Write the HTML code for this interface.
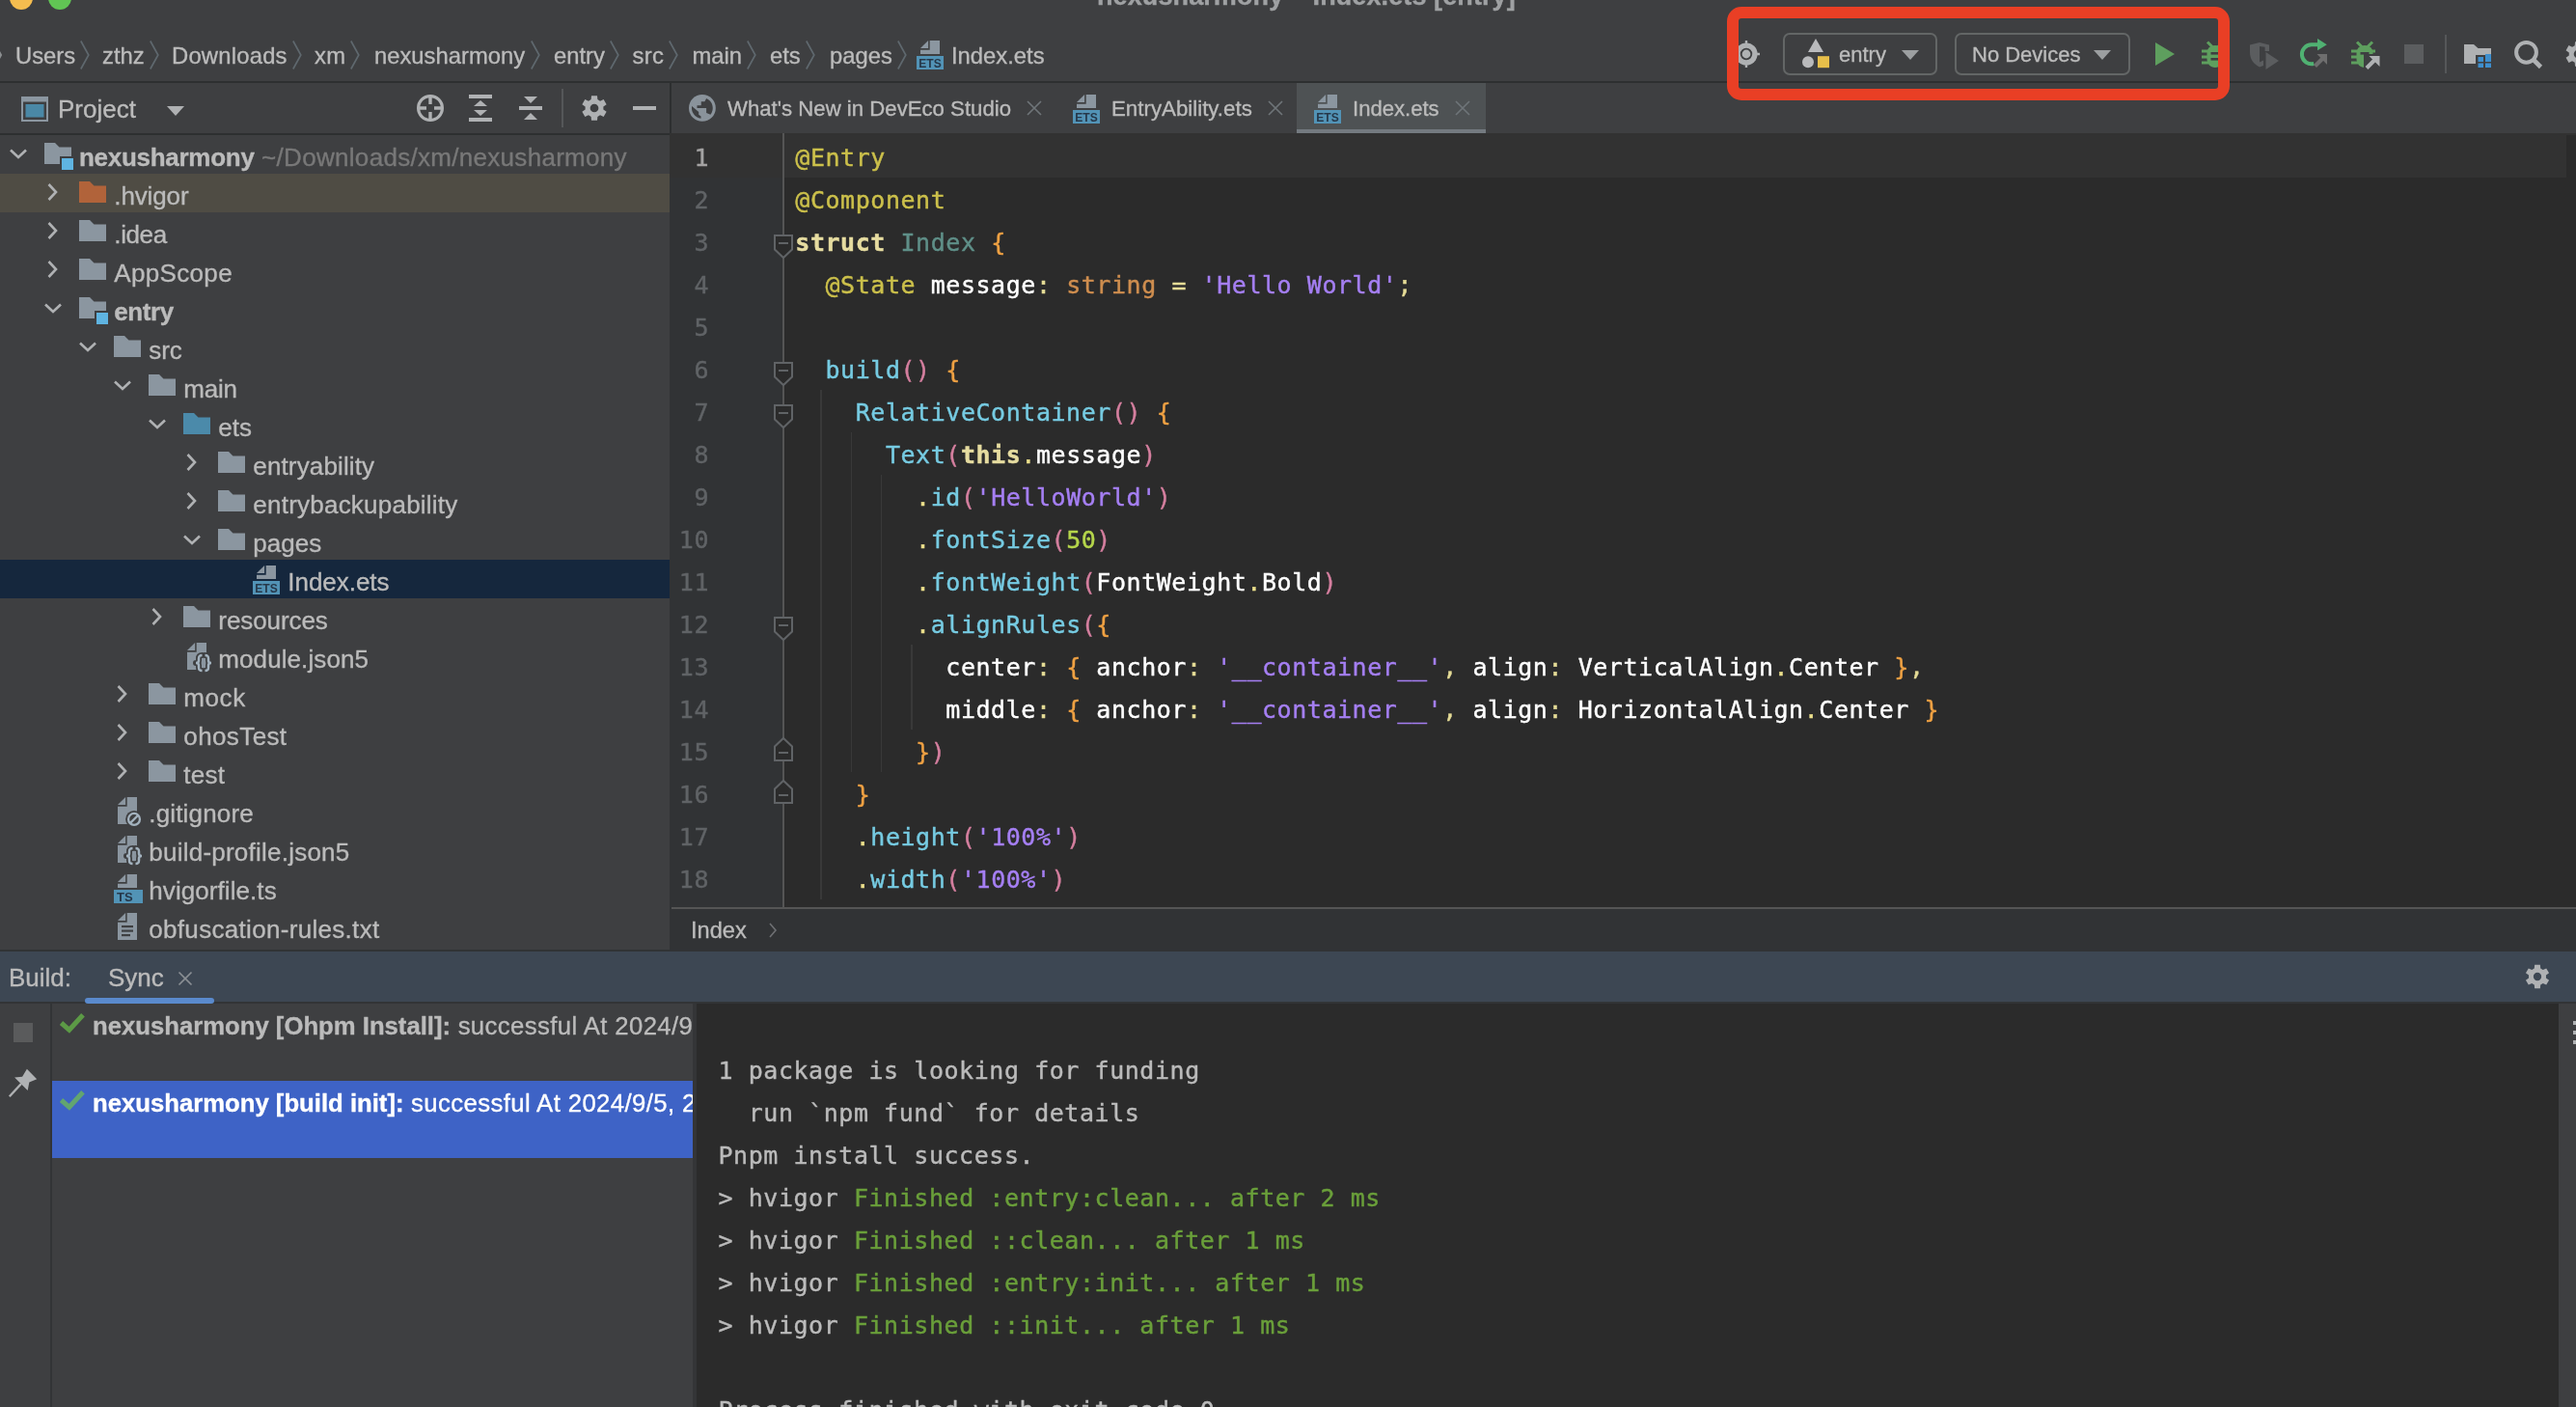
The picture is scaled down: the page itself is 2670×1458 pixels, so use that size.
<!DOCTYPE html><html><head><meta charset="utf-8"><title>nexusharmony – Index.ets [entry]</title>
<style>
html,body{margin:0;padding:0;background:#3e3f41;}
body{width:2670px;height:1458px;overflow:hidden;position:relative;font-family:"Liberation Sans", sans-serif;}
#app{position:absolute;left:0;top:0;width:2670px;height:1458px;overflow:hidden;will-change:transform;}
#app div, #app svg{position:absolute;display:block;}
#app svg{overflow:visible;}
.t{white-space:pre;line-height:40px;height:40px;-webkit-text-stroke:0.35px;}
.t span{white-space:pre;}
.code{font-family:"DejaVu Sans Mono", "Liberation Mono", monospace;font-size:25px;line-height:44px;height:44px;white-space:pre;color:#ffffff;letter-spacing:0.55px;-webkit-text-stroke:0.4px;}
.fn{color:#76cbe2;} .pa{color:#d57f9f;} .br{color:#efa143;} .kw{color:#e6dca0;font-weight:bold;}
.dot{color:#ebdf8b;} .st{color:#a57ff3;} .nu{color:#b5d64b;} .de{color:#ccc04b;} .ty{color:#5f8f88;}
.pt{color:#cf8e4f;} .op{color:#e5dc96;} .id{color:#ffffff;} .cm{color:#e5dc96;}
.con{font-family:"DejaVu Sans Mono", "Liberation Mono", monospace;font-size:25px;line-height:44px;height:44px;white-space:pre;color:#bbbbbb;letter-spacing:0.55px;-webkit-text-stroke:0.4px;}
.g{color:#6a9f3a;}
</style></head><body><div id="app">
<div style="left:10px;top:-14px;width:24px;height:24px;background:#f5bd4f;border-radius:50%;"></div>
<div style="left:50px;top:-14px;width:24px;height:24px;background:#61c554;border-radius:50%;"></div>
<div class="t " style="left:1137px;top:-21px;font-size:27px;color:#9fa1a3;font-weight:bold;line-height:34px;height:34px;letter-spacing:0.1px;">nexusharmony – Index.ets [entry]</div>
<div style="left:0px;top:84px;width:2670px;height:2px;background:#2d2f30;"></div>
<svg style="left:-8px;top:42px;" width="10" height="30" viewBox="0 0 10 30"><path d="M0.8,0.5L8.8,15L0.8,29.5" fill="none" stroke="#8b8e90" stroke-width="2.4"/></svg>
<div class="t " style="left:16px;top:38px;font-size:23.8px;color:#bbbbbb;line-height:40px;height:40px;width:66px;">Users</div>
<svg style="left:83px;top:42px;" width="10" height="30" viewBox="0 0 10 30"><path d="M0.8,0.5L8.8,15L0.8,29.5" fill="none" stroke="#5f686e" stroke-width="1.7"/></svg>
<div class="t " style="left:106px;top:38px;font-size:23.8px;color:#bbbbbb;line-height:40px;height:40px;width:47.5px;">zthz</div>
<svg style="left:154.5px;top:42px;" width="10" height="30" viewBox="0 0 10 30"><path d="M0.8,0.5L8.8,15L0.8,29.5" fill="none" stroke="#5f686e" stroke-width="1.7"/></svg>
<div class="t " style="left:178px;top:38px;font-size:23.8px;color:#bbbbbb;line-height:40px;height:40px;letter-spacing:0.22px;width:123.5px;">Downloads</div>
<svg style="left:302.5px;top:42px;" width="10" height="30" viewBox="0 0 10 30"><path d="M0.8,0.5L8.8,15L0.8,29.5" fill="none" stroke="#5f686e" stroke-width="1.7"/></svg>
<div class="t " style="left:326px;top:38px;font-size:23.8px;color:#bbbbbb;line-height:40px;height:40px;letter-spacing:0.24px;width:36px;">xm</div>
<svg style="left:363px;top:42px;" width="10" height="30" viewBox="0 0 10 30"><path d="M0.8,0.5L8.8,15L0.8,29.5" fill="none" stroke="#5f686e" stroke-width="1.7"/></svg>
<div class="t " style="left:388px;top:38px;font-size:23.8px;color:#bbbbbb;line-height:40px;height:40px;width:160.5px;">nexusharmony</div>
<svg style="left:549.5px;top:42px;" width="10" height="30" viewBox="0 0 10 30"><path d="M0.8,0.5L8.8,15L0.8,29.5" fill="none" stroke="#5f686e" stroke-width="1.7"/></svg>
<div class="t " style="left:574px;top:38px;font-size:23.8px;color:#bbbbbb;line-height:40px;height:40px;width:57px;">entry</div>
<svg style="left:632px;top:42px;" width="10" height="30" viewBox="0 0 10 30"><path d="M0.8,0.5L8.8,15L0.8,29.5" fill="none" stroke="#5f686e" stroke-width="1.7"/></svg>
<div class="t " style="left:655.5px;top:38px;font-size:23.8px;color:#bbbbbb;line-height:40px;height:40px;letter-spacing:0.37px;width:36.5px;">src</div>
<svg style="left:693px;top:42px;" width="10" height="30" viewBox="0 0 10 30"><path d="M0.8,0.5L8.8,15L0.8,29.5" fill="none" stroke="#5f686e" stroke-width="1.7"/></svg>
<div class="t " style="left:717.5px;top:38px;font-size:23.8px;color:#bbbbbb;line-height:40px;height:40px;width:55.5px;">main</div>
<svg style="left:774px;top:42px;" width="10" height="30" viewBox="0 0 10 30"><path d="M0.8,0.5L8.8,15L0.8,29.5" fill="none" stroke="#5f686e" stroke-width="1.7"/></svg>
<div class="t " style="left:798px;top:38px;font-size:23.8px;color:#bbbbbb;line-height:40px;height:40px;width:36px;">ets</div>
<svg style="left:835px;top:42px;" width="10" height="30" viewBox="0 0 10 30"><path d="M0.8,0.5L8.8,15L0.8,29.5" fill="none" stroke="#5f686e" stroke-width="1.7"/></svg>
<div class="t " style="left:860px;top:38px;font-size:23.8px;color:#bbbbbb;line-height:40px;height:40px;width:69px;">pages</div>
<svg style="left:930px;top:42px;" width="10" height="30" viewBox="0 0 10 30"><path d="M0.8,0.5L8.8,15L0.8,29.5" fill="none" stroke="#5f686e" stroke-width="1.7"/></svg>
<svg style="left:949px;top:42px;" width="30" height="30" viewBox="0 0 30 30"><path d="M14.7,0H25V14H5V9.7H14.7Z" fill="#8b96a0"/><path d="M5,8.1L13.1,0V8.1Z" fill="#8b96a0"/><rect x="1" y="16" width="28" height="14" fill="#5293b6"/><text x="15" y="27.8" font-family="Liberation Sans, sans-serif" font-weight="bold" font-size="13" fill="#26384a" text-anchor="middle" textLength="23.5" lengthAdjust="spacingAndGlyphs">ETS</text></svg>
<div class="t " style="left:986px;top:38px;font-size:23.8px;color:#bbbbbb;line-height:40px;height:40px;">Index.ets</div>
<svg style="left:1796px;top:42px;" width="28" height="28" viewBox="0 0 28 28"><path d="M14,0V28M0,14H28" stroke="#afb1b3" stroke-width="2.4"/><circle cx="14" cy="14" r="11.6" fill="#afb1b3"/><circle cx="14" cy="14" r="5.3" fill="none" stroke="#3e3f41" stroke-width="1.8"/></svg>
<div style="left:1848px;top:34px;width:156px;height:40px;background:transparent;border:2px solid #636666;border-radius:7px;"></div>
<svg style="left:1866px;top:38px;" width="32" height="34" viewBox="0 0 32 34"><path d="M16,2L24,16H8Z" fill="#b9babc"/><circle cx="8" cy="26.2" r="6" fill="#b9babc"/><rect x="18" y="20.2" width="12" height="12" fill="#e8bf4a"/></svg>
<div class="t " style="left:1906px;top:37px;font-size:22px;color:#bbbbbb;line-height:40px;height:40px;">entry</div>
<svg style="left:1971px;top:52px;" width="18" height="10" viewBox="0 0 18 10"><path d="M0,0H18L9,10Z" fill="#9c9fa1"/></svg>
<div style="left:2026px;top:34px;width:178px;height:40px;background:transparent;border:2px solid #636666;border-radius:7px;"></div>
<div class="t " style="left:2044px;top:37px;font-size:22px;color:#bbbbbb;line-height:40px;height:40px;">No Devices</div>
<svg style="left:2170px;top:52px;" width="18" height="10" viewBox="0 0 18 10"><path d="M0,0H18L9,10Z" fill="#9c9fa1"/></svg>
<svg style="left:2234px;top:44px;" width="20" height="24" viewBox="0 0 20 24"><path d="M0,0L20,12L0,24Z" fill="#5e9f5e"/></svg>
<svg style="left:2282px;top:42px;" width="28" height="28" viewBox="0 0 28 28"><path d="M6,1.5L11,6.5M22,1.5L17,6.5" stroke="#5e9f5e" stroke-width="3" fill="none"/><path d="M14,5C20,5 22.5,9 22.5,13V19C22.5,24 19,28 14,28C9,28 5.5,24 5.5,19V13C5.5,9 8,5 14,5Z" fill="#5e9f5e"/><path d="M0,11H7M0,17H7M0,23H7M21,11H28M21,17H28M21,23H28" stroke="#5e9f5e" stroke-width="3" fill="none"/><rect x="9.5" y="12" width="9" height="2.6" fill="#3e3f41"/><rect x="9.5" y="18" width="9" height="2.6" fill="#3e3f41"/></svg>
<svg style="left:2332px;top:44px;" width="30" height="28" viewBox="0 0 30 28"><path d="M10,0L20,2.5V9H14V24L10,25.5C4,22 0,18 0,10V2.5Z" fill="#5b5d5f"/><path d="M10,4L15.6,4.8V9.5H14V18.5L10,20.5Z" fill="#3e3f41"/><path d="M16.5,10L30,19L16.5,28Z" fill="#5b5d5f"/></svg>
<svg style="left:2383px;top:40px;" width="30" height="30" viewBox="0 0 30 30"><path d="M19,6.3H12.8A10,10 0 1 0 15.3,26" fill="none" stroke="#50b172" stroke-width="4"/><path d="M19,0L28.8,6.2L19,12.2Z" fill="#50b172"/><path d="M16.5,28.5L25.5,19.5" stroke="#6e6e6e" stroke-width="4.2" fill="none"/><path d="M18.5,16H29V27Z" fill="#6e6e6e"/></svg>
<svg style="left:2437px;top:42px;" width="30" height="30" viewBox="0 0 30 30"><path d="M6,1.5L11,6.5M22,1.5L17,6.5" stroke="#5e9f5e" stroke-width="3" fill="none"/><path d="M14,5C20,5 22.5,9 22.5,13V19C22.5,24 19,28 14,28C9,28 5.5,24 5.5,19V13C5.5,9 8,5 14,5Z" fill="#5e9f5e"/><path d="M0,11H7M0,17H7M0,23H7M21,11H25" stroke="#5e9f5e" stroke-width="3" fill="none"/><rect x="9.5" y="12" width="9" height="2.6" fill="#3e3f41"/><path d="M11,30L31,10V30Z" fill="#3e3f41"/><rect x="13" y="14" width="18" height="17" fill="#3e3f41"/><path d="M16,28.5L26,18.5" stroke="#afb1b3" stroke-width="4" fill="none"/><path d="M18.5,16H29.5V27Z" fill="#afb1b3"/></svg>
<div style="left:2492px;top:46px;width:20px;height:20px;background:#5b5d5f;"></div>
<div style="left:2534px;top:36px;width:2px;height:40px;background:#555759;"></div>
<svg style="left:2554px;top:46px;" width="28" height="24" viewBox="0 0 28 24"><path d="M0,0H10L14.5,4H28V11H12V20H0Z" fill="#afb1b3"/><rect x="14.5" y="13" width="5.5" height="5" fill="#3e8fce"/><rect x="22" y="10" width="6" height="8" fill="#3e8fce"/><rect x="14.5" y="19.5" width="5.5" height="4.5" fill="#3e8fce"/><rect x="22" y="19.5" width="6" height="4.5" fill="#3e8fce"/></svg>
<svg style="left:2604px;top:40px;" width="32" height="32" viewBox="0 0 32 32"><circle cx="14.5" cy="14.3" r="10.4" fill="none" stroke="#afb1b3" stroke-width="4"/><path d="M21.5,21.5L29.5,29.5" stroke="#afb1b3" stroke-width="4.6"/></svg>
<svg style="left:2656px;top:40px;" width="32" height="32" viewBox="0 0 32 32"><path d="M12.70,7.24L13.04,3.34L18.96,3.34L19.30,7.24L21.94,8.76L25.48,7.10L28.44,12.24L25.24,14.48L25.24,17.52L28.44,19.76L25.48,24.90L21.94,23.24L19.30,24.76L18.96,28.66L13.04,28.66L12.70,24.76L10.06,23.24L6.52,24.90L3.56,19.76L6.76,17.52L6.76,14.48L3.56,12.24L6.52,7.10L10.06,8.76ZM20.29,16.00A4.29,4.29 0 1 0 11.71,16.00A4.29,4.29 0 1 0 20.29,16.00Z" fill="#afb1b3" fill-rule="evenodd"/></svg>
<div style="left:0px;top:138px;width:694px;height:2px;background:#2d2f30;"></div>
<div style="left:694px;top:86px;width:2px;height:54px;background:#2d2f30;"></div>
<svg style="left:22px;top:100px;" width="28" height="26" viewBox="0 0 28 26"><rect x="0" y="0" width="28" height="26" fill="#8b96a0"/><rect x="2" y="5.5" width="24" height="18.5" fill="#3e3f41"/><rect x="4.5" y="8" width="19" height="13.5" fill="#4a88a6"/></svg>
<div class="t " style="left:60px;top:93px;font-size:26px;color:#bbbbbb;line-height:40px;height:40px;">Project</div>
<svg style="left:173px;top:110px;" width="18" height="10" viewBox="0 0 18 10"><path d="M0,0H18L9,10Z" fill="#afb1b3"/></svg>
<svg style="left:432px;top:98px;" width="28" height="28" viewBox="0 0 28 28"><circle cx="14" cy="14" r="12.4" fill="none" stroke="#afb1b3" stroke-width="3.2"/><path d="M14,2V10M14,18V26M2,14H10M18,14H26" stroke="#afb1b3" stroke-width="3.4" fill="none"/></svg>
<svg style="left:486px;top:98px;" width="24" height="28" viewBox="0 0 24 28"><rect x="0" y="0" width="24" height="4" fill="#afb1b3"/><rect x="0" y="24" width="24" height="4" fill="#afb1b3"/><path d="M12,6L19,12H5Z" fill="#afb1b3"/><path d="M12,22L19,16H5Z" fill="#afb1b3"/></svg>
<svg style="left:538px;top:98px;" width="24" height="28" viewBox="0 0 24 28"><rect x="0" y="12" width="24" height="4" fill="#afb1b3"/><path d="M12,9L19,2H5Z" fill="#afb1b3"/><path d="M12,19L19,26H5Z" fill="#afb1b3"/></svg>
<div style="left:582px;top:92px;width:2px;height:40px;background:#555759;"></div>
<svg style="left:602px;top:98px;" width="28" height="28" viewBox="0 0 28 28"><path d="M10.65,5.11L10.99,1.15L17.01,1.15L17.35,5.11L20.03,6.65L23.63,4.97L26.64,10.18L23.38,12.45L23.38,15.55L26.64,17.82L23.63,23.03L20.03,21.35L17.35,22.89L17.01,26.85L10.99,26.85L10.65,22.89L7.97,21.35L4.37,23.03L1.36,17.82L4.62,15.55L4.62,12.45L1.36,10.18L4.37,4.97L7.97,6.65ZM18.36,14.00A4.36,4.36 0 1 0 9.64,14.00A4.36,4.36 0 1 0 18.36,14.00Z" fill="#afb1b3" fill-rule="evenodd"/></svg>
<div style="left:656px;top:110px;width:24px;height:4px;background:#afb1b3;"></div>
<svg style="left:8px;top:151px;" width="22" height="16" viewBox="0 0 22 16"><path d="M3,4.5L11,12L19,4.5" fill="none" stroke="#afb1b3" stroke-width="2.6"/></svg>
<svg style="left:46px;top:148px;" width="32" height="30" viewBox="0 0 32 30"><path d="M0,0H11L15.5,4.5H28V22H0Z" fill="#8b96a0"/><rect x="16" y="14" width="16" height="16" fill="#3e3f41"/><rect x="18" y="16" width="12" height="12" fill="#5fb4e1"/></svg>
<div class="t " style="left:82px;top:143px;font-size:26px;color:#bbbbbb;line-height:40px;height:40px;"><span style="font-weight:bold;letter-spacing:-0.28px">nexusharmony</span><span style="color:#787878;letter-spacing:0.3px"> ~/Downloads/xm/nexusharmony</span></div>
<div style="left:0px;top:180px;width:694px;height:40px;background:#4f4c44;"></div>
<svg style="left:46px;top:188px;" width="16" height="22" viewBox="0 0 16 22"><path d="M4.5,3L12,11L4.5,19" fill="none" stroke="#afb1b3" stroke-width="2.6"/></svg>
<svg style="left:82px;top:188px;" width="28" height="22" viewBox="0 0 28 22"><path d="M0,0H11L15.5,4.5H28V22H0Z" fill="#b1633a"/></svg>
<div class="t " style="left:118.3px;top:183px;font-size:26px;color:#bbbbbb;line-height:40px;height:40px;"><span style="letter-spacing:-0.13px">.hvigor</span></div>
<svg style="left:46px;top:228px;" width="16" height="22" viewBox="0 0 16 22"><path d="M4.5,3L12,11L4.5,19" fill="none" stroke="#afb1b3" stroke-width="2.6"/></svg>
<svg style="left:82px;top:228px;" width="28" height="22" viewBox="0 0 28 22"><path d="M0,0H11L15.5,4.5H28V22H0Z" fill="#8b96a0"/></svg>
<div class="t " style="left:118.3px;top:223px;font-size:26px;color:#bbbbbb;line-height:40px;height:40px;"><span style="letter-spacing:-0.38px">.idea</span></div>
<svg style="left:46px;top:268px;" width="16" height="22" viewBox="0 0 16 22"><path d="M4.5,3L12,11L4.5,19" fill="none" stroke="#afb1b3" stroke-width="2.6"/></svg>
<svg style="left:82px;top:268px;" width="28" height="22" viewBox="0 0 28 22"><path d="M0,0H11L15.5,4.5H28V22H0Z" fill="#8b96a0"/></svg>
<div class="t " style="left:118.3px;top:263px;font-size:26px;color:#bbbbbb;line-height:40px;height:40px;"><span style="letter-spacing:0.33px">AppScope</span></div>
<svg style="left:44px;top:311px;" width="22" height="16" viewBox="0 0 22 16"><path d="M3,4.5L11,12L19,4.5" fill="none" stroke="#afb1b3" stroke-width="2.6"/></svg>
<svg style="left:82px;top:308px;" width="32" height="30" viewBox="0 0 32 30"><path d="M0,0H11L15.5,4.5H28V22H0Z" fill="#8b96a0"/><rect x="16" y="14" width="16" height="16" fill="#3e3f41"/><rect x="18" y="16" width="12" height="12" fill="#5fb4e1"/></svg>
<div class="t " style="left:118.3px;top:303px;font-size:26px;color:#bbbbbb;line-height:40px;height:40px;"><span style="font-weight:bold;letter-spacing:-0.4px">entry</span></div>
<svg style="left:80px;top:351px;" width="22" height="16" viewBox="0 0 22 16"><path d="M3,4.5L11,12L19,4.5" fill="none" stroke="#afb1b3" stroke-width="2.6"/></svg>
<svg style="left:118px;top:348px;" width="28" height="22" viewBox="0 0 28 22"><path d="M0,0H11L15.5,4.5H28V22H0Z" fill="#8b96a0"/></svg>
<div class="t " style="left:154.3px;top:343px;font-size:26px;color:#bbbbbb;line-height:40px;height:40px;"><span style="letter-spacing:-0.1px">src</span></div>
<svg style="left:116px;top:391px;" width="22" height="16" viewBox="0 0 22 16"><path d="M3,4.5L11,12L19,4.5" fill="none" stroke="#afb1b3" stroke-width="2.6"/></svg>
<svg style="left:154px;top:388px;" width="28" height="22" viewBox="0 0 28 22"><path d="M0,0H11L15.5,4.5H28V22H0Z" fill="#8b96a0"/></svg>
<div class="t " style="left:190.3px;top:383px;font-size:26px;color:#bbbbbb;line-height:40px;height:40px;"><span style="letter-spacing:-0.23px">main</span></div>
<svg style="left:152px;top:431px;" width="22" height="16" viewBox="0 0 22 16"><path d="M3,4.5L11,12L19,4.5" fill="none" stroke="#afb1b3" stroke-width="2.6"/></svg>
<svg style="left:190px;top:428px;" width="28" height="22" viewBox="0 0 28 22"><path d="M0,0H11L15.5,4.5H28V22H0Z" fill="#4b8aaa"/></svg>
<div class="t " style="left:226.3px;top:423px;font-size:26px;color:#bbbbbb;line-height:40px;height:40px;"><span style="letter-spacing:0.05px">ets</span></div>
<svg style="left:190px;top:468px;" width="16" height="22" viewBox="0 0 16 22"><path d="M4.5,3L12,11L4.5,19" fill="none" stroke="#afb1b3" stroke-width="2.6"/></svg>
<svg style="left:226px;top:468px;" width="28" height="22" viewBox="0 0 28 22"><path d="M0,0H11L15.5,4.5H28V22H0Z" fill="#8b96a0"/></svg>
<div class="t " style="left:262.3px;top:463px;font-size:26px;color:#bbbbbb;line-height:40px;height:40px;"><span style="letter-spacing:0.14px">entryability</span></div>
<svg style="left:190px;top:508px;" width="16" height="22" viewBox="0 0 16 22"><path d="M4.5,3L12,11L4.5,19" fill="none" stroke="#afb1b3" stroke-width="2.6"/></svg>
<svg style="left:226px;top:508px;" width="28" height="22" viewBox="0 0 28 22"><path d="M0,0H11L15.5,4.5H28V22H0Z" fill="#8b96a0"/></svg>
<div class="t " style="left:262.3px;top:503px;font-size:26px;color:#bbbbbb;line-height:40px;height:40px;"><span style="letter-spacing:0.23px">entrybackupability</span></div>
<svg style="left:188px;top:551px;" width="22" height="16" viewBox="0 0 22 16"><path d="M3,4.5L11,12L19,4.5" fill="none" stroke="#afb1b3" stroke-width="2.6"/></svg>
<svg style="left:226px;top:548px;" width="28" height="22" viewBox="0 0 28 22"><path d="M0,0H11L15.5,4.5H28V22H0Z" fill="#8b96a0"/></svg>
<div class="t " style="left:262.3px;top:543px;font-size:26px;color:#bbbbbb;line-height:40px;height:40px;">pages</div>
<div style="left:0px;top:580px;width:694px;height:40px;background:#15273d;"></div>
<svg style="left:261px;top:586px;" width="30" height="30" viewBox="0 0 30 30"><path d="M14.7,0H25V14H5V9.7H14.7Z" fill="#8b96a0"/><path d="M5,8.1L13.1,0V8.1Z" fill="#8b96a0"/><rect x="1" y="16" width="28" height="14" fill="#5293b6"/><text x="15" y="27.8" font-family="Liberation Sans, sans-serif" font-weight="bold" font-size="13" fill="#26384a" text-anchor="middle" textLength="23.5" lengthAdjust="spacingAndGlyphs">ETS</text></svg>
<div class="t " style="left:298.3px;top:583px;font-size:26px;color:#bbbbbb;line-height:40px;height:40px;"><span style="letter-spacing:-0.04px">Index.ets</span></div>
<svg style="left:154px;top:628px;" width="16" height="22" viewBox="0 0 16 22"><path d="M4.5,3L12,11L4.5,19" fill="none" stroke="#afb1b3" stroke-width="2.6"/></svg>
<svg style="left:190px;top:628px;" width="28" height="22" viewBox="0 0 28 22"><path d="M0,0H11L15.5,4.5H28V22H0Z" fill="#8b96a0"/></svg>
<div class="t " style="left:226.3px;top:623px;font-size:26px;color:#bbbbbb;line-height:40px;height:40px;"><span style="letter-spacing:-0.08px">resources</span></div>
<svg style="left:194px;top:666px;" width="30" height="32" viewBox="0 0 30 32"><path d="M9.7,0H20V28H0V9.7H9.7Z" fill="#8b96a0"/><path d="M0,8.1L8.1,0V8.1Z" fill="#8b96a0"/><path d="M15.5,13C12.5,13 12,14 12,16.5V18.5C12,20.5 10.5,21 9,21C10.5,21 12,21.5 12,23.5V25.5C12,28 12.5,29 15.5,29M18.5,13C21.5,13 22,14 22,16.5V18.5C22,20.5 23.5,21 25,21C23.5,21 22,21.5 22,23.5V25.5C22,28 21.5,29 18.5,29" fill="none" stroke="#3e3f41" stroke-width="6" stroke-linecap="round" stroke-linejoin="round"/><path d="M15.5,13C12.5,13 12,14 12,16.5V18.5C12,20.5 10.5,21 9,21C10.5,21 12,21.5 12,23.5V25.5C12,28 12.5,29 15.5,29M18.5,13C21.5,13 22,14 22,16.5V18.5C22,20.5 23.5,21 25,21C23.5,21 22,21.5 22,23.5V25.5C22,28 21.5,29 18.5,29" fill="none" stroke="#a3b2be" stroke-width="2.5"/></svg>
<div class="t " style="left:226.3px;top:663px;font-size:26px;color:#bbbbbb;line-height:40px;height:40px;"><span style="letter-spacing:0.09px">module.json5</span></div>
<svg style="left:118px;top:708px;" width="16" height="22" viewBox="0 0 16 22"><path d="M4.5,3L12,11L4.5,19" fill="none" stroke="#afb1b3" stroke-width="2.6"/></svg>
<svg style="left:154px;top:708px;" width="28" height="22" viewBox="0 0 28 22"><path d="M0,0H11L15.5,4.5H28V22H0Z" fill="#8b96a0"/></svg>
<div class="t " style="left:190.3px;top:703px;font-size:26px;color:#bbbbbb;line-height:40px;height:40px;"><span style="letter-spacing:0.57px">mock</span></div>
<svg style="left:118px;top:748px;" width="16" height="22" viewBox="0 0 16 22"><path d="M4.5,3L12,11L4.5,19" fill="none" stroke="#afb1b3" stroke-width="2.6"/></svg>
<svg style="left:154px;top:748px;" width="28" height="22" viewBox="0 0 28 22"><path d="M0,0H11L15.5,4.5H28V22H0Z" fill="#8b96a0"/></svg>
<div class="t " style="left:190.3px;top:743px;font-size:26px;color:#bbbbbb;line-height:40px;height:40px;"><span style="letter-spacing:0.39px">ohosTest</span></div>
<svg style="left:118px;top:788px;" width="16" height="22" viewBox="0 0 16 22"><path d="M4.5,3L12,11L4.5,19" fill="none" stroke="#afb1b3" stroke-width="2.6"/></svg>
<svg style="left:154px;top:788px;" width="28" height="22" viewBox="0 0 28 22"><path d="M0,0H11L15.5,4.5H28V22H0Z" fill="#8b96a0"/></svg>
<div class="t " style="left:190.3px;top:783px;font-size:26px;color:#bbbbbb;line-height:40px;height:40px;"><span style="letter-spacing:0.27px">test</span></div>
<svg style="left:122px;top:826px;" width="30" height="34" viewBox="0 0 30 34"><path d="M9.7,0H20V28H0V9.7H9.7Z" fill="#8b96a0"/><path d="M0,8.1L8.1,0V8.1Z" fill="#8b96a0"/><circle cx="17" cy="22.9" r="8.9" fill="#3e3f41"/><circle cx="17" cy="22.9" r="5.95" fill="none" stroke="#a3b2be" stroke-width="2.3"/><path d="M12.8,27.1L21.2,18.7" stroke="#a3b2be" stroke-width="2.3"/></svg>
<div class="t " style="left:154.3px;top:823px;font-size:26px;color:#bbbbbb;line-height:40px;height:40px;"><span style="letter-spacing:0.16px">.gitignore</span></div>
<svg style="left:122px;top:866px;" width="30" height="32" viewBox="0 0 30 32"><path d="M9.7,0H20V28H0V9.7H9.7Z" fill="#8b96a0"/><path d="M0,8.1L8.1,0V8.1Z" fill="#8b96a0"/><path d="M15.5,13C12.5,13 12,14 12,16.5V18.5C12,20.5 10.5,21 9,21C10.5,21 12,21.5 12,23.5V25.5C12,28 12.5,29 15.5,29M18.5,13C21.5,13 22,14 22,16.5V18.5C22,20.5 23.5,21 25,21C23.5,21 22,21.5 22,23.5V25.5C22,28 21.5,29 18.5,29" fill="none" stroke="#3e3f41" stroke-width="6" stroke-linecap="round" stroke-linejoin="round"/><path d="M15.5,13C12.5,13 12,14 12,16.5V18.5C12,20.5 10.5,21 9,21C10.5,21 12,21.5 12,23.5V25.5C12,28 12.5,29 15.5,29M18.5,13C21.5,13 22,14 22,16.5V18.5C22,20.5 23.5,21 25,21C23.5,21 22,21.5 22,23.5V25.5C22,28 21.5,29 18.5,29" fill="none" stroke="#a3b2be" stroke-width="2.5"/></svg>
<div class="t " style="left:154.3px;top:863px;font-size:26px;color:#bbbbbb;line-height:40px;height:40px;"><span style="letter-spacing:0.23px">build-profile.json5</span></div>
<svg style="left:118px;top:906px;" width="30" height="30" viewBox="0 0 30 30"><path d="M13.7,0H24V14H4V9.7H13.7Z" fill="#8b96a0"/><path d="M4,8.1L12.1,0V8.1Z" fill="#8b96a0"/><rect x="0" y="16" width="30" height="14" fill="#5293b6"/><text x="3" y="27.8" font-family="Liberation Sans, sans-serif" font-weight="bold" font-size="13" fill="#26384a">TS</text></svg>
<div class="t " style="left:154.3px;top:903px;font-size:26px;color:#bbbbbb;line-height:40px;height:40px;"><span style="letter-spacing:0.07px">hvigorfile.ts</span></div>
<svg style="left:122px;top:946px;" width="20" height="28" viewBox="0 0 20 28"><path d="M9.7,0H20V28H0V9.7H9.7Z" fill="#8b96a0"/><path d="M0,8.1L8.1,0V8.1Z" fill="#8b96a0"/><rect x="4" y="13" width="12" height="2.2" fill="#3e3f41"/><rect x="4" y="17.5" width="12" height="2.2" fill="#3e3f41"/><rect x="4" y="22" width="9" height="2.2" fill="#3e3f41"/></svg>
<div class="t " style="left:154.3px;top:943px;font-size:26px;color:#bbbbbb;line-height:40px;height:40px;"><span style="letter-spacing:0.31px">obfuscation-rules.txt</span></div>
<div style="left:0px;top:984px;width:694px;height:2px;background:#313335;"></div>
<div style="left:696px;top:138px;width:1974px;height:2px;background:#323232;"></div>
<svg style="left:708px;top:92px;" width="40" height="40" viewBox="0 0 40 40"><circle cx="19.9" cy="19.9" r="13.9" fill="#8a939b"/><path d="M24.1,9.9A10.9,10.9 0 0 1 28.4,26.7L24.1,25V19.9H14.5V17.3H18.75V13.35H22.4Z" fill="#3e3f41"/><path d="M9.1,17.9L16.2,24.1V26.7L18.5,28.4V30.7A10.9,10.9 0 0 1 9.1,17.9Z" fill="#3e3f41"/></svg>
<div class="t " style="left:754px;top:93px;font-size:22.2px;color:#bbbbbb;line-height:40px;height:40px;">What&#x27;s New in DevEco Studio</div>
<svg style="left:1062.4px;top:101.6px;" width="20" height="20" viewBox="0 0 20 20"><path d="M3,3L17,17M17,3L3,17" stroke="#6e7478" stroke-width="1.7" fill="none"/></svg>
<svg style="left:1111px;top:98px;" width="30" height="30" viewBox="0 0 30 30"><path d="M14.7,0H25V14H5V9.7H14.7Z" fill="#8b96a0"/><path d="M5,8.1L13.1,0V8.1Z" fill="#8b96a0"/><rect x="1" y="16" width="28" height="14" fill="#5293b6"/><text x="15" y="27.8" font-family="Liberation Sans, sans-serif" font-weight="bold" font-size="13" fill="#26384a" text-anchor="middle" textLength="23.5" lengthAdjust="spacingAndGlyphs">ETS</text></svg>
<div class="t " style="left:1152px;top:93px;font-size:22.3px;color:#bbbbbb;line-height:40px;height:40px;">EntryAbility.ets</div>
<svg style="left:1312px;top:101.6px;" width="20" height="20" viewBox="0 0 20 20"><path d="M3,3L17,17M17,3L3,17" stroke="#6e7478" stroke-width="1.7" fill="none"/></svg>
<div style="left:1344px;top:86px;width:196px;height:54px;background:#4e5254;"></div>
<div style="left:1344px;top:134px;width:196px;height:6px;background:#747a80;"></div>
<svg style="left:1361px;top:98px;" width="30" height="30" viewBox="0 0 30 30"><path d="M14.7,0H25V14H5V9.7H14.7Z" fill="#8b96a0"/><path d="M5,8.1L13.1,0V8.1Z" fill="#8b96a0"/><rect x="1" y="16" width="28" height="14" fill="#5293b6"/><text x="15" y="27.8" font-family="Liberation Sans, sans-serif" font-weight="bold" font-size="13" fill="#26384a" text-anchor="middle" textLength="23.5" lengthAdjust="spacingAndGlyphs">ETS</text></svg>
<div class="t " style="left:1402px;top:93px;font-size:22.1px;color:#bbbbbb;line-height:40px;height:40px;">Index.ets</div>
<svg style="left:1506px;top:101.6px;" width="20" height="20" viewBox="0 0 20 20"><path d="M3,3L17,17M17,3L3,17" stroke="#6e7478" stroke-width="1.7" fill="none"/></svg>
<div style="left:694px;top:140px;width:119px;height:802px;background:#313335;"></div>
<div style="left:813px;top:140px;width:1857px;height:802px;background:#2b2b2b;"></div>
<div style="left:694px;top:138px;width:1966px;height:46px;background:#323232;"></div>
<div style="left:811px;top:138px;width:2px;height:804px;background:#555555;"></div>
<div style="left:850px;top:404px;width:1.5px;height:528px;background:#393939;"></div>
<div style="left:881.5px;top:448px;width:1.5px;height:352px;background:#393939;"></div>
<div style="left:912.5px;top:492px;width:1.5px;height:308px;background:#393939;"></div>
<div style="left:944px;top:668px;width:1.5px;height:88px;background:#393939;"></div>
<div class="code" style="left:694px;top:142px;width:41px;text-align:right;color:#a4a3a3;">1</div>
<div class="code" style="left:824.3px;top:142px;"><span class="de">@Entry</span></div>
<div class="code" style="left:694px;top:186px;width:41px;text-align:right;color:#606366;">2</div>
<div class="code" style="left:824.3px;top:186px;"><span class="de">@Component</span></div>
<div class="code" style="left:694px;top:230px;width:41px;text-align:right;color:#606366;">3</div>
<div class="code" style="left:824.3px;top:230px;"><span class="kw">struct</span> <span class="ty">Index</span> <span class="br">{</span></div>
<div class="code" style="left:694px;top:274px;width:41px;text-align:right;color:#606366;">4</div>
<div class="code" style="left:824.3px;top:274px;">  <span class="de">@State</span> <span class="id">message</span><span class="op">:</span> <span class="pt">string</span> <span class="op">=</span> <span class="st">&#x27;Hello World&#x27;</span><span class="op">;</span></div>
<div class="code" style="left:694px;top:318px;width:41px;text-align:right;color:#606366;">5</div>
<div class="code" style="left:694px;top:362px;width:41px;text-align:right;color:#606366;">6</div>
<div class="code" style="left:824.3px;top:362px;">  <span class="fn">build</span><span class="pa">()</span> <span class="br">{</span></div>
<div class="code" style="left:694px;top:406px;width:41px;text-align:right;color:#606366;">7</div>
<div class="code" style="left:824.3px;top:406px;">    <span class="fn">RelativeContainer</span><span class="pa">()</span> <span class="br">{</span></div>
<div class="code" style="left:694px;top:450px;width:41px;text-align:right;color:#606366;">8</div>
<div class="code" style="left:824.3px;top:450px;">      <span class="fn">Text</span><span class="pa">(</span><span class="kw">this</span><span class="dot">.</span><span class="id">message</span><span class="pa">)</span></div>
<div class="code" style="left:694px;top:494px;width:41px;text-align:right;color:#606366;">9</div>
<div class="code" style="left:824.3px;top:494px;">        <span class="dot">.</span><span class="fn">id</span><span class="pa">(</span><span class="st">&#x27;HelloWorld&#x27;</span><span class="pa">)</span></div>
<div class="code" style="left:694px;top:538px;width:41px;text-align:right;color:#606366;">10</div>
<div class="code" style="left:824.3px;top:538px;">        <span class="dot">.</span><span class="fn">fontSize</span><span class="pa">(</span><span class="nu">50</span><span class="pa">)</span></div>
<div class="code" style="left:694px;top:582px;width:41px;text-align:right;color:#606366;">11</div>
<div class="code" style="left:824.3px;top:582px;">        <span class="dot">.</span><span class="fn">fontWeight</span><span class="pa">(</span><span class="id">FontWeight</span><span class="dot">.</span><span class="id">Bold</span><span class="pa">)</span></div>
<div class="code" style="left:694px;top:626px;width:41px;text-align:right;color:#606366;">12</div>
<div class="code" style="left:824.3px;top:626px;">        <span class="dot">.</span><span class="fn">alignRules</span><span class="pa">(</span><span class="br">{</span></div>
<div class="code" style="left:694px;top:670px;width:41px;text-align:right;color:#606366;">13</div>
<div class="code" style="left:824.3px;top:670px;">          <span class="id">center</span><span class="op">:</span> <span class="br">{</span> <span class="id">anchor</span><span class="op">:</span> <span class="st">&#x27;__container__&#x27;</span><span class="cm">,</span> <span class="id">align</span><span class="op">:</span> <span class="id">VerticalAlign</span><span class="dot">.</span><span class="id">Center</span> <span class="br">}</span><span class="cm">,</span></div>
<div class="code" style="left:694px;top:714px;width:41px;text-align:right;color:#606366;">14</div>
<div class="code" style="left:824.3px;top:714px;">          <span class="id">middle</span><span class="op">:</span> <span class="br">{</span> <span class="id">anchor</span><span class="op">:</span> <span class="st">&#x27;__container__&#x27;</span><span class="cm">,</span> <span class="id">align</span><span class="op">:</span> <span class="id">HorizontalAlign</span><span class="dot">.</span><span class="id">Center</span> <span class="br">}</span></div>
<div class="code" style="left:694px;top:758px;width:41px;text-align:right;color:#606366;">15</div>
<div class="code" style="left:824.3px;top:758px;">        <span class="br">}</span><span class="pa">)</span></div>
<div class="code" style="left:694px;top:802px;width:41px;text-align:right;color:#606366;">16</div>
<div class="code" style="left:824.3px;top:802px;">    <span class="br">}</span></div>
<div class="code" style="left:694px;top:846px;width:41px;text-align:right;color:#606366;">17</div>
<div class="code" style="left:824.3px;top:846px;">    <span class="dot">.</span><span class="fn">height</span><span class="pa">(</span><span class="st">&#x27;100%&#x27;</span><span class="pa">)</span></div>
<div class="code" style="left:694px;top:890px;width:41px;text-align:right;color:#606366;">18</div>
<div class="code" style="left:824.3px;top:890px;">    <span class="dot">.</span><span class="fn">width</span><span class="pa">(</span><span class="st">&#x27;100%&#x27;</span><span class="pa">)</span></div>
<svg style="left:802px;top:243px;" width="20" height="25" viewBox="0 0 20 25"><path d="M1,1H19V15.5L10,24L1,15.5Z" fill="#2b2b2b" stroke="#606366" stroke-width="2"/><rect x="5" y="8" width="10" height="2" fill="#606366"/></svg>
<svg style="left:802px;top:375px;" width="20" height="25" viewBox="0 0 20 25"><path d="M1,1H19V15.5L10,24L1,15.5Z" fill="#2b2b2b" stroke="#606366" stroke-width="2"/><rect x="5" y="8" width="10" height="2" fill="#606366"/></svg>
<svg style="left:802px;top:419px;" width="20" height="25" viewBox="0 0 20 25"><path d="M1,1H19V15.5L10,24L1,15.5Z" fill="#2b2b2b" stroke="#606366" stroke-width="2"/><rect x="5" y="8" width="10" height="2" fill="#606366"/></svg>
<svg style="left:802px;top:639px;" width="20" height="25" viewBox="0 0 20 25"><path d="M1,1H19V15.5L10,24L1,15.5Z" fill="#2b2b2b" stroke="#606366" stroke-width="2"/><rect x="5" y="8" width="10" height="2" fill="#606366"/></svg>
<svg style="left:802px;top:764px;" width="20" height="25" viewBox="0 0 20 25"><path d="M1,24H19V9.5L10,1L1,9.5Z" fill="#2b2b2b" stroke="#606366" stroke-width="2"/><rect x="5" y="15" width="10" height="2" fill="#606366"/></svg>
<svg style="left:802px;top:808px;" width="20" height="25" viewBox="0 0 20 25"><path d="M1,24H19V9.5L10,1L1,9.5Z" fill="#2b2b2b" stroke="#606366" stroke-width="2"/><rect x="5" y="15" width="10" height="2" fill="#606366"/></svg>
<div style="left:696px;top:940px;width:1974px;height:2px;background:#555555;"></div>
<div style="left:694px;top:942px;width:1976px;height:44px;background:#313335;"></div>
<div class="t " style="left:716px;top:944px;font-size:23.6px;color:#bbbbbb;line-height:40px;height:40px;">Index</div>
<svg style="left:797px;top:956px;" width="8" height="16" viewBox="0 0 8 16"><path d="M1,1L7,8L1,15" fill="none" stroke="#6e7073" stroke-width="1.6"/></svg>
<div style="left:0px;top:986px;width:2670px;height:52px;background:#3d4753;"></div>
<div style="left:0px;top:1038px;width:2670px;height:2px;background:#323436;"></div>
<div class="t " style="left:9px;top:993px;font-size:26px;color:#bbbbbb;line-height:40px;height:40px;">Build:</div>
<div class="t " style="left:112px;top:993px;font-size:26px;color:#bbbbbb;line-height:40px;height:40px;">Sync</div>
<svg style="left:182px;top:1004px;" width="20" height="20" viewBox="0 0 20 20"><path d="M3.5,3.5L16.5,16.5M16.5,3.5L3.5,16.5" stroke="#8a8f94" stroke-width="1.7" fill="none"/></svg>
<div style="left:88px;top:1034px;width:134px;height:6px;background:#5a8acd;border-radius:3px;"></div>
<svg style="left:2616px;top:998px;" width="28" height="28" viewBox="0 0 28 28"><path d="M10.80,5.51L11.13,1.73L16.87,1.73L17.20,5.51L19.76,6.99L23.19,5.38L26.06,10.35L22.95,12.52L22.95,15.48L26.06,17.65L23.19,22.62L19.76,21.01L17.20,22.49L16.87,26.27L11.13,26.27L10.80,22.49L8.24,21.01L4.81,22.62L1.94,17.65L5.05,15.48L5.05,12.52L1.94,10.35L4.81,5.38L8.24,6.99ZM18.16,14.00A4.16,4.16 0 1 0 9.84,14.00A4.16,4.16 0 1 0 18.16,14.00Z" fill="#afb1b3" fill-rule="evenodd"/></svg>
<div style="left:52px;top:1040px;width:2px;height:418px;background:#323436;"></div>
<div style="left:14px;top:1060px;width:20px;height:20px;background:#5a5b5c;"></div>
<svg style="left:9px;top:1107px;" width="30" height="30" viewBox="0 0 30 30"><path d="M18.9,0.8L29.2,11.2L21.3,14.4L19.7,23.1L6.1,9.6L14.1,8.8Z" fill="#afb1b3"/><path d="M13,16L0.8,29.3" stroke="#afb1b3" stroke-width="2.4"/></svg>
<div style="left:54px;top:1120px;width:664px;height:80px;background:#3e63c6;"></div>
<svg style="left:62px;top:1050px;" width="26" height="20" viewBox="0 0 26 20"><path d="M1.5,10L9.8,17.3L24,1.8" fill="none" stroke="#5c9a46" stroke-width="5"/></svg>
<svg style="left:62px;top:1130px;" width="26" height="20" viewBox="0 0 26 20"><path d="M1.5,10L9.8,17.3L24,1.8" fill="none" stroke="#62a570" stroke-width="5"/></svg>
<div style="left:54px;top:1040px;width:664px;height:160px;overflow:hidden;">
<div class="t" style="left:42px;top:3px;font-size:25.7px;color:#bbbbbb;"><b>nexusharmony [Ohpm Install]:</b><span style="letter-spacing:0.4px"> successful At 2024/9/5, 21:08</span></div>
<div class="t" style="left:42px;top:83px;font-size:25.7px;color:#ffffff;"><b>nexusharmony [build init]:</b><span style="letter-spacing:0.4px"> successful At 2024/9/5, 21:08</span></div>
</div>
<div style="left:718px;top:1040px;width:4px;height:418px;background:#343537;"></div>
<div style="left:722px;top:1040px;width:1930px;height:418px;background:#2b2b2b;"></div>
<div class="con" style="left:744.5px;top:1088px;">1 package is looking for funding</div>
<div class="con" style="left:744.5px;top:1132px;">  run `npm fund` for details</div>
<div class="con" style="left:744.5px;top:1176px;">Pnpm install success.</div>
<div class="con" style="left:744.5px;top:1220px;">&gt; hvigor <span class="g">Finished :entry:clean... after 2 ms</span></div>
<div class="con" style="left:744.5px;top:1264px;">&gt; hvigor <span class="g">Finished ::clean... after 1 ms</span></div>
<div class="con" style="left:744.5px;top:1308px;">&gt; hvigor <span class="g">Finished :entry:init... after 1 ms</span></div>
<div class="con" style="left:744.5px;top:1352px;">&gt; hvigor <span class="g">Finished ::init... after 1 ms</span></div>
<div class="con" style="left:744.5px;top:1440px;">Process finished with exit code 0</div>
<div style="left:2667px;top:1058px;width:4px;height:4px;background:#afb1b3;"></div>
<div style="left:2667px;top:1068px;width:4px;height:4px;background:#afb1b3;"></div>
<div style="left:2667px;top:1078px;width:4px;height:4px;background:#afb1b3;"></div>
<div style="left:1790px;top:7px;width:497px;height:72.5px;background:transparent;border:12px solid #e93f25;border-radius:15px;"></div>
</div></body></html>
